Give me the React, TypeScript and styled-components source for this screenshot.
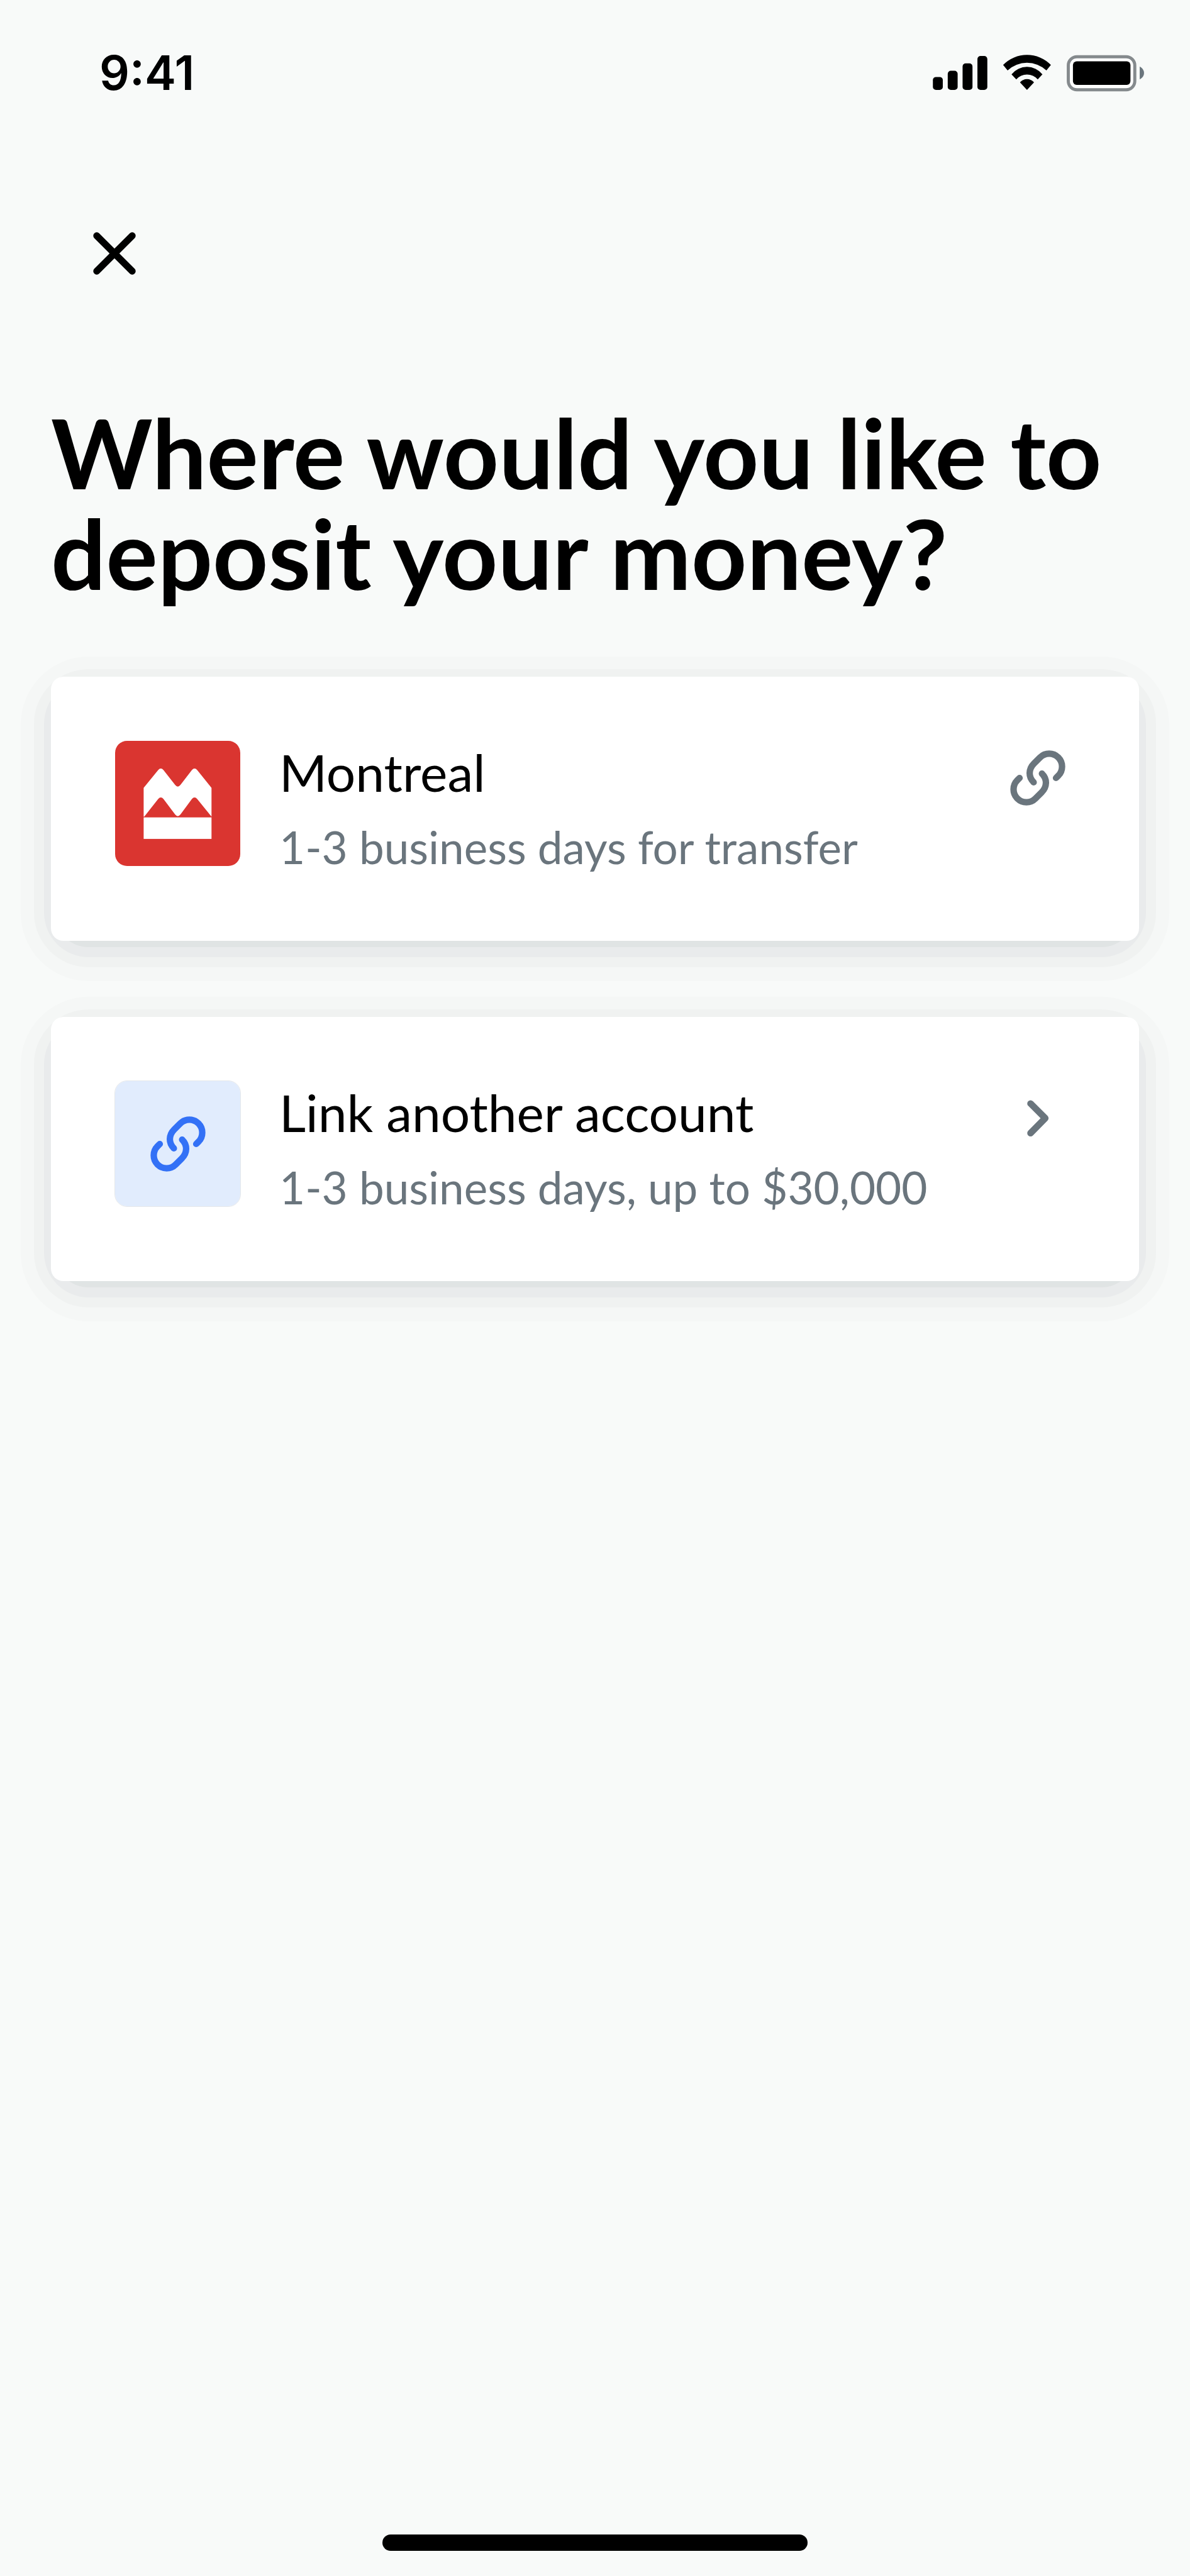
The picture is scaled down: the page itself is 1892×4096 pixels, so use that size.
import type { ReactNode } from "react"
import styled, { createGlobalStyle } from "styled-components"

const GlobalStyle = createGlobalStyle`
	* {
		box-sizing: border-box;
	}

	body {
		margin: 0;
		background: #f8faf9;
	}
`

const Screen = styled.div`
	display: flex;
	flex-direction: column;
	min-height: 100vh;
	color: #000;
	font-family: Lato, "Liberation Sans", sans-serif;
`

const StatusBar = styled.header`
	display: flex;
	align-items: center;
	justify-content: space-between;
	height: 232px;
	padding: 0 72px 0 158px;
`

const Time = styled.time`
	font-family: Inter, "Liberation Sans", sans-serif;
	font-size: 75px;
	font-weight: 600;
	line-height: 88px;
`

const StatusIcons = styled.div`
	display: flex;
	align-items: center;
	gap: 24px;

	svg {
		display: block;
		height: 59px;
	}
`

const CloseButton = styled.button`
	align-self: flex-start;
	width: 80px;
	height: 80px;
	margin: 131px 0 0 142px;
	padding: 0;
	border: 0;
	background: none;
	cursor: pointer;

	svg {
		display: block;
	}
`

const Main = styled.main`
	flex: 1;
	padding: 196px 81px 0;
`

const Title = styled.h1`
	margin: 0 0 117px;
	font-size: 154px;
	font-weight: 700;
	line-height: 160px;
`

const AccountList = styled.ul`
	display: flex;
	flex-direction: column;
	gap: 121px;
	margin: 0;
	padding: 0;
	list-style: none;
`

const AccountItem = styled.li`
	border-radius: 60px;
	box-shadow:
		0 16px 0 -6px #e0e4e4,
		0 15px 0 11px #e9ebec,
		0 15px 0 27px #f0f2f1,
		0 16px 0 48px #f5f7f6;
`

const AccountButton = styled.button`
	display: flex;
	align-items: flex-start;
	width: 100%;
	min-height: 420px;
	padding: 91px 111px 89px 101px;
	border: 0;
	border-radius: 20px;
	background: #fff;
	color: #000;
	font-family: inherit;
	text-align: left;
	cursor: pointer;
`

const Tile = styled.span<{ $fill: string; $border: string }>`
	display: flex;
	flex-shrink: 0;
	align-items: center;
	justify-content: center;
	width: 201px;
	height: 201px;
	margin: 10px 61px 0 0;
	border: 1px solid ${({ $border }) => $border};
	border-radius: 20px;
	background: ${({ $fill }) => $fill};
	background-clip: padding-box;
	color: #3371f6;
`

const Texts = styled.span`
	display: flex;
	flex: 1;
	flex-direction: column;
	line-height: 120px;
`

const Name = styled.span`
	font-size: 82px;
`

const Details = styled.span`
	color: #6a757d;
	font-size: 71px;
`

const Trailing = styled.span`
	display: flex;
	margin-top: 20px;
	color: #6a757d;
`

const HomeIndicator = styled.div`
	align-self: center;
	width: 676px;
	height: 26px;
	margin-bottom: 40px;
	border-radius: 13px;
	background: #000;
`

const SignalIcon = () => (
	<svg width="87" viewBox="1505 88 88 60" aria-hidden="true">
		<rect x="1505" y="124" width="16" height="21" rx="5" />
		<rect x="1529" y="114" width="16" height="31" rx="5" />
		<rect x="1553" y="102" width="16" height="43" rx="5" />
		<rect x="1577" y="90" width="16" height="55" rx="5" />
	</svg>
)

const WifiIcon = () => (
	<svg width="78" viewBox="1618 88 79 60" aria-hidden="true">
		<path d="M1618.7 104.5A54 54 0 0 1 1696 104.5L1688.7 113.3A46 46 0 0 0 1626 113.3Z" />
		<path d="M1632.3 119.7A32 32 0 0 1 1682.3 119.7L1674.7 128A23 23 0 0 0 1640 128Z" />
		<path d="M1646 132.7A15 15 0 0 1 1668.7 132.7L1657.3 145Z" />
	</svg>
)

const BatteryIcon = () => (
	<svg width="124" viewBox="1722 88 126 60" aria-hidden="true">
		<rect x="1724.5" y="91.3" width="107.5" height="53.4" rx="14" fill="#fff" stroke="#858a8d" strokeWidth="5" />
		<rect x="1732" y="98.7" width="93" height="38" rx="6" />
		<path d="M1840 107Q1847 111 1847 117.5Q1847 124 1840 128Z" fill="#6a757d" />
	</svg>
)

const CloseIcon = () => (
	<svg width="80" height="80" viewBox="0 0 80 80" aria-hidden="true">
		<path d="M11.8 11.8L68.2 68.2M68.2 11.8L11.8 68.2" stroke="#000" strokeWidth="11" strokeLinecap="round" />
	</svg>
)

const LinkIcon = () => (
	<svg
		width="100"
		height="100"
		viewBox="250 405 304 304"
		fill="none"
		stroke="currentColor"
		strokeWidth="31"
		strokeLinecap="round"
		aria-hidden="true"
	>
		<path d="M490 557L501 546A62.2 62.2 0 0 0 413 458L384 487C356 515 356 552 382 578" />
		<path d="M314 557L303 568A62.2 62.2 0 0 0 391 656L420 627C448 599 448 562 422 536" />
	</svg>
)

const ChevronIcon = () => (
	<svg
		width="100"
		height="100"
		viewBox="250 404 304 304"
		fill="none"
		stroke="currentColor"
		strokeWidth="32"
		strokeLinecap="round"
		strokeLinejoin="round"
		aria-hidden="true"
	>
		<path d="M367 485L438 556L367 628" />
	</svg>
)

const MontrealLogo = () => (
	<svg width="199" height="199" viewBox="0 0 605 605" fill="#fff" aria-hidden="true">
		<path d="M138 227L208 141Q221 126 234 141L290 213Q303 229 316 213L371 141Q384 126 397 141L466 227V366L397 281Q384 266 371 281L316 356Q303 372 290 356L234 281Q221 266 208 281L141 366H138Z" />
		<rect x="138" y="370" width="328" height="104" />
	</svg>
)

type AccountProps = {
	name: string
	details: string
	tileFill: string
	tileBorder: string
	logo: ReactNode
	trailing: ReactNode
}

const Account = ({ name, details, tileFill, tileBorder, logo, trailing }: AccountProps) => (
	<AccountItem>
		<AccountButton type="button">
			<Tile $fill={tileFill} $border={tileBorder}>
				{logo}
			</Tile>
			<Texts>
				<Name>{name}</Name>
				<Details>{details}</Details>
			</Texts>
			<Trailing>{trailing}</Trailing>
		</AccountButton>
	</AccountItem>
)

const App = () => (
	<Screen>
		<GlobalStyle />
		<StatusBar>
			<Time>9:41</Time>
			<StatusIcons>
				<SignalIcon />
				<WifiIcon />
				<BatteryIcon />
			</StatusIcons>
		</StatusBar>
		<CloseButton type="button" aria-label="Close">
			<CloseIcon />
		</CloseButton>
		<Main>
			<Title>
				Where would you like to
				<br />
				deposit your money?
			</Title>
			<AccountList>
				<Account
					name="Montreal"
					details="1-3 business days for transfer"
					tileFill="#da3530"
					tileBorder="transparent"
					logo={<MontrealLogo />}
					trailing={<LinkIcon />}
				/>
				<Account
					name="Link another account"
					details="1-3 business days, up to $30,000"
					tileFill="#e1ecfd"
					tileBorder="#e5e8eb"
					logo={<LinkIcon />}
					trailing={<ChevronIcon />}
				/>
			</AccountList>
		</Main>
		<HomeIndicator />
	</Screen>
)

export default App
